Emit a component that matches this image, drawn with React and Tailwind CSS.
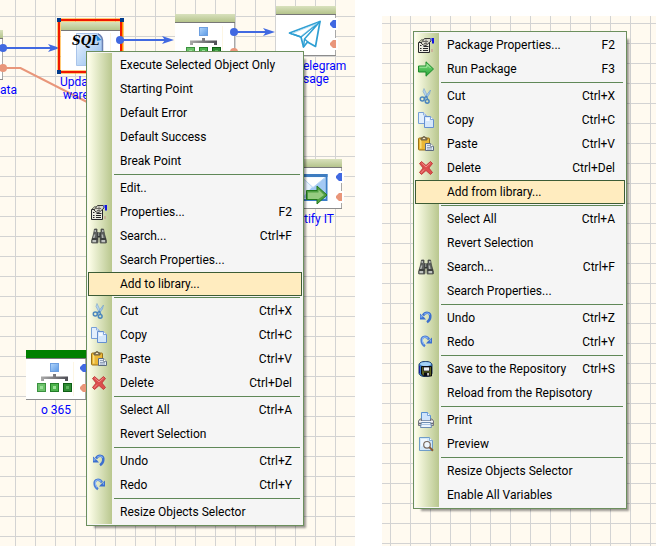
import React from "react";

const UI_FONT = "font-['Roboto','Open_Sans',sans-serif]";

/* ---------- menu icons (16 × 16) ---------- */

function Icon({ children }) {
  return (
    <svg viewBox="0 0 16 16" className="h-4 w-4" aria-hidden="true">
      {children}
    </svg>
  );
}

const PropertiesIcon = () => (
  <Icon>
    <path d="M0.5 5.5h11v10h-11z" fill="#ecebe2" stroke="#26262a" />
    <path d="M0.5 5.5 4 2.5l2 1.5" fill="none" stroke="#55554f" />
    <path d="M3 6 6.5 1.5h6L13 4l-5 4.5-3-.5z" fill="#d9d8cf" stroke="#3b3a38" />
    <path d="M5 4.5h5M6 6.5h3M8 2.5v5" stroke="#6d6b66" />
    <path d="M2 8.5h1.500M5.500 9.500h5M2 11.500h1.500M5 11.500h5M2 13.500h1.500M5 13.500h5" stroke="#26262a" />
    <path d="M12 1h2v3h-1z" fill="#6577d6" />
    <path d="M14 1h2v5.500h-2z" fill="#1414e0" />
    <path d="M13 12h2v3h-2z" fill="#cbb39a" />
  </Icon>
);

const SearchIcon = () => (
  <Icon>
    <path d="M3.500 1h2.500v2.500L7 5v8.500a1 1 0 0 1-1 1.500H1.500a1.200 1.200 0 0 1-1.200-1.400L2.500 6z" fill="#5d605e" stroke="#3a3c3b" strokeWidth=".7" />
    <path d="M12.500 1H10v2.500L9 5v8.500a1 1 0 0 0 1 1.500h4.500a1.200 1.200 0 0 0 1.200-1.400L13.500 6z" fill="#5d605e" stroke="#3a3c3b" strokeWidth=".7" />
    <path d="M6.500 4.500h3v5h-3z" fill="#333735" />
    <path d="M7.300 5h1v3h-1z" fill="#a9adaa" />
    <path d="M3.500 2h1.500v2H3.500zM11 2h1.500v2H11zM3 6.500h1.500L3.500 10H2zM10.500 6.500H12l.5 3.500H11z" fill="#b1b5b2" />
    <path d="M1 11h5.500M9.500 11H15" stroke="#202221" strokeWidth="1" />
    <path d="M1.500 12h3.500v2.200H1.500zM10.500 12h3.500v2.200h-3.500z" fill="#bfc3c0" />
  </Icon>
);

const CutIcon = () => (
  <Icon>
    <path d="M6 .5 5 3.500 8.500 10l1.300-1.300z" fill="#b5d4ef" stroke="#7ba6cc" strokeWidth=".6" />
    <path d="M12.500 2 11.500 6 7.500 11l-1-1.500z" fill="#a2c7ea" stroke="#6d9cc9" strokeWidth=".6" />
    <circle cx="4.300" cy="11" r="2" fill="none" stroke="#4b86bd" strokeWidth="1.500" />
    <circle cx="9.200" cy="13.300" r="1.900" fill="none" stroke="#4b86bd" strokeWidth="1.500" />
    <path d="m6 9.800 2.500-1.300 1.300 2.800" fill="none" stroke="#4b86bd" strokeWidth="1.300" />
  </Icon>
);

const CopyIcon = () => (
  <Icon>
    <path d="M.5.5h5l2.500 2.500v8.500H.5z" fill="#e3effc" stroke="#769fd8" />
    <path d="M5.500.5V3H8" fill="#fff" stroke="#769fd8" strokeWidth=".8" />
    <path d="M6.500 4.500h6l3 3v8h-9z" fill="#d5e7fb" stroke="#648fd0" />
    <path d="M12.500 4.500v3h3" fill="#fff" stroke="#648fd0" strokeWidth=".8" />
    <path d="M8 6h3.500v3H8z" fill="#f4f9ff" />
  </Icon>
);

const PasteIcon = () => (
  <Icon>
    <rect x=".5" y="2" width="11" height="12" rx="1" fill="#eab737" stroke="#9b7118" />
    <path d="M2 3.500h1.500v9H2z" fill="#f9dd7c" />
    <path d="M3 4V2h1.500a1.500 1.500 0 0 1 3 0H9v2z" fill="#9a8c6b" stroke="#5e5138" strokeWidth=".8" />
    <path d="M5 2h2v1H5z" fill="#f4e8bf" />
    <path d="M7.500 7.500h5l3 2.800v4.200h-8z" fill="#e2eaf5" stroke="#5c6b80" />
    <path d="M9 9.500h3M9 11.500h5M9 13h5" stroke="#8b9cb5" strokeWidth=".9" />
    <path d="M12.500 7.500v3h3" fill="#fff" stroke="#5c6b80" strokeWidth=".7" />
  </Icon>
);

const DeleteIcon = () => (
  <Icon>
    <path
      d="M3.500 1.500 8 5.500 12.500 1.500 14.500 3.500 10.900 8l3.600 4.500-2 2L8 10.500 3.500 14.500l-2-2L5.100 8 1.500 3.500z"
      fill="#dc4e4e"
      stroke="#c03434"
      strokeWidth=".9"
      strokeLinejoin="round"
    />
    <path d="m3.500 2.900 4.500 4 4.500-4M3 12.800l3-3.200" fill="none" stroke="#f08e88" strokeWidth="1" />
  </Icon>
);

const UndoIcon = () => (
  <Icon>
    <path d="M5 5.500C7.500 1.500 12.800 2 12.300 7c-.2 2.500-1.300 4-3.300 5.200" fill="none" stroke="#3c6fce" strokeWidth="2.500" />
    <path d="M6 4.300c2-2 5-1.800 5.600.7" fill="none" stroke="#86b1f3" strokeWidth="1.100" />
    <path d="M2 3.500v6h6L6 7.300z" fill="#3c6fce" />
    <path d="M2.500 4.500v3.500l2.500-1z" fill="#7daaf0" />
  </Icon>
);

const RedoIcon = () => (
  <Icon>
    <path d="M11 5.500C8.500 1.500 3.200 2 3.700 7c.2 2.500 1.300 4 3.300 5.200" fill="none" stroke="#4c7fd6" strokeWidth="2.500" />
    <path d="M10 4.300c-2-2-5-1.800-5.600.7-.3 2 .3 4 1.600 5.500" fill="none" stroke="#92baf5" strokeWidth="1.100" />
    <path d="M14 3.500v6H8L10 7.300z" fill="#3c6fce" />
    <path d="m13 5-1.500 2 1.500 1z" fill="#7daaf0" />
  </Icon>
);

const RunIcon = () => (
  <Icon>
    <defs>
      <linearGradient id="run-fill" x1="0" y1="0" x2="0" y2="1">
        <stop offset="0" stopColor="#8be386" />
        <stop offset="1" stopColor="#1fa032" />
      </linearGradient>
    </defs>
    <path d="M.5 5H8V.8L15.500 8 8 15.200V11H.5z" fill="url(#run-fill)" stroke="#1b8a2b" strokeLinejoin="round" />
    <path d="M1.500 6.200H9V3.500l3.500 3.500" fill="none" stroke="#b3efad" strokeWidth=".8" />
  </Icon>
);

const SaveIcon = () => (
  <Icon>
    <path d="M1 4C1 1.500 4 .5 7.500.5S14 1.500 14 4v8c0 2.500-3 3.500-6.500 3.500S1 14.500 1 12z" fill="#3c7fc8" stroke="#173a6d" />
    <ellipse cx="7.500" cy="3" rx="5.500" ry="2" fill="#a5d2f6" />
    <path d="M3.500 5.500h10v9.500h-8l-2-2z" fill="#5d6420" stroke="#0a0a12" />
    <path d="M5.500 6h6v4h-6z" fill="#eef1f4" stroke="#0a0a12" strokeWidth=".7" />
    <path d="M6 11.500h5.500V15H6z" fill="#0a0a12" />
    <path d="M9.300 12h1.500v2.500H9.300z" fill="#f4f4f4" />
    <path d="M1.500 5v7" stroke="#1621a1" />
  </Icon>
);

const PrintIcon = () => (
  <Icon>
    <path d="M3.500.5h6l3 3V9h-9z" fill="#cfe4fb" stroke="#5990d0" />
    <path d="M9.500.5v3h3" fill="#fff" stroke="#5990d0" strokeWidth=".8" />
    <path d="M2 7h1.500v2h9V7H14l1.500 2v4.500H.5V9z" fill="#c5c7ce" stroke="#74757e" />
    <path d="M1 9.500h14" stroke="#f5f6f9" />
    <path d="M1 11.500h2M13 11.500h2" stroke="#686a73" />
    <path d="M3.500 10.500h9l1 5h-11z" fill="#edf5fe" stroke="#6d8db3" />
    <path d="M4 12.500h8" stroke="#a9c4e2" />
  </Icon>
);

const PreviewIcon = () => (
  <Icon>
    <path d="M1.500 1.500h10l3 3v10h-13z" fill="#d3e8fa" stroke="#6f9dc9" />
    <path d="M11.500 1.500v3h3" fill="#fff" stroke="#6f9dc9" strokeWidth=".8" />
    <path d="M3 3h6v3L3 11z" fill="#f0f8ff" />
    <circle cx="9" cy="8.800" r="3.300" fill="#eef6fc" stroke="#77695f" strokeWidth="1.200" />
    <path d="m11.500 11.300 3.500 3.500" stroke="#8b5a34" strokeWidth="2" />
  </Icon>
);

/* ---------- context menus ---------- */

const objectMenu = [
  [
    { label: "Execute Selected Object Only" },
    { label: "Starting Point" },
    { label: "Default Error" },
    { label: "Default Success" },
    { label: "Break Point" },
  ],
  [
    { label: "Edit.." },
    { label: "Properties...", keys: "F2", icon: PropertiesIcon },
    { label: "Search...", keys: "Ctrl+F", icon: SearchIcon },
    { label: "Search Properties..." },
    { label: "Add to library...", active: true },
  ],
  [
    { label: "Cut", keys: "Ctrl+X", icon: CutIcon },
    { label: "Copy", keys: "Ctrl+C", icon: CopyIcon },
    { label: "Paste", keys: "Ctrl+V", icon: PasteIcon },
    { label: "Delete", keys: "Ctrl+Del", icon: DeleteIcon },
  ],
  [{ label: "Select All", keys: "Ctrl+A" }, { label: "Revert Selection" }],
  [
    { label: "Undo", keys: "Ctrl+Z", icon: UndoIcon },
    { label: "Redo", keys: "Ctrl+Y", icon: RedoIcon },
  ],
  [{ label: "Resize Objects Selector" }],
];

const packageMenu = [
  [
    { label: "Package Properties...", keys: "F2", icon: PropertiesIcon },
    { label: "Run Package", keys: "F3", icon: RunIcon },
  ],
  [
    { label: "Cut", keys: "Ctrl+X", icon: CutIcon },
    { label: "Copy", keys: "Ctrl+C", icon: CopyIcon },
    { label: "Paste", keys: "Ctrl+V", icon: PasteIcon },
    { label: "Delete", keys: "Ctrl+Del", icon: DeleteIcon },
    { label: "Add from library...", active: true },
  ],
  [
    { label: "Select All", keys: "Ctrl+A" },
    { label: "Revert Selection" },
    { label: "Search...", keys: "Ctrl+F", icon: SearchIcon },
    { label: "Search Properties..." },
  ],
  [
    { label: "Undo", keys: "Ctrl+Z", icon: UndoIcon },
    { label: "Redo", keys: "Ctrl+Y", icon: RedoIcon },
  ],
  [
    { label: "Save to the Repository", keys: "Ctrl+S", icon: SaveIcon },
    { label: "Reload from the Repisotory" },
  ],
  [
    { label: "Print", icon: PrintIcon },
    { label: "Preview", icon: PreviewIcon },
  ],
  [{ label: "Resize Objects Selector" }, { label: "Enable All Variables" }],
];

function MenuItem({ label, keys, icon: Glyph, active }) {
  return (
    <button
      type="button"
      role="menuitem"
      className={
        "flex h-6 w-full items-center border pr-[9px] text-left " +
        (active ? "border-[#3d5c35] bg-[#ffecbf]" : "border-transparent")
      }
    >
      <span className="flex w-[31px] shrink-0 pl-[2px]">{Glyph && <Glyph />}</span>
      <span className="flex-1 whitespace-nowrap">{label}</span>
      {keys && <span className="whitespace-nowrap">{keys}</span>}
    </button>
  );
}

function ContextMenu({ groups, label, className }) {
  return (
    <div
      role="menu"
      aria-label={label}
      className={
        "absolute border border-[#6c8f5d] bg-[#f5f5f5] p-px text-[12px] leading-4 text-black shadow-[5px_5px_2px_-3px_rgba(0,0,0,0.4)] " +
        className
      }
    >
      <div className="bg-[linear-gradient(to_right,#ffffeb,#dbe3bd_12px,#b9c78e_24px,transparent_24px)]">
        {groups.map((items, i) => (
          <React.Fragment key={i}>
            {i > 0 && (
              <div role="separator" className="py-px pl-[26px] pr-[2px]">
                <div className="h-px bg-[#5f8857]" />
              </div>
            )}
            {items.map((item) => (
              <MenuItem key={item.label} {...item} />
            ))}
          </React.Fragment>
        ))}
      </div>
    </div>
  );
}

/* ---------- diagram ---------- */

function Node({ className, head, children }) {
  return (
    <div className={"absolute flex h-[50px] w-[60px] flex-col border-b border-[#8c8c8c] bg-white " + className}>
      <div
        className={
          "h-[9px] border-b border-[#777777] " +
          (head === "green" ? "bg-[#008000]" : "bg-linear-to-b from-[#d9e1bd] to-[#b5c48c]")
        }
      />
      <div className="flex-1 border-r border-r-[#a8a8a8]">{children}</div>
    </div>
  );
}

function TreeIcon() {
  return (
    <svg viewBox="0 0 48 40" className="h-10 w-12" aria-hidden="true">
      <defs>
        <linearGradient id="tree-top" x1="0" y1="0" x2="1" y2="1">
          <stop offset="0" stopColor="#b2d5fa" />
          <stop offset="1" stopColor="#5b9ae6" />
        </linearGradient>
        <linearGradient id="tree-bar" x1="0" y1="0" x2="1" y2="0">
          <stop offset="0" stopColor="#aaaaaa" />
          <stop offset="1" stopColor="#4d4d55" />
        </linearGradient>
      </defs>
      <rect x="24.500" y="4.500" width="8" height="8" fill="url(#tree-top)" stroke="#6d9fe0" />
      <path d="M27 15h3v2.500h12V22h-3v-2H18v2h-3v-4.500h12z" fill="url(#tree-bar)" />
      <rect x="11.500" y="24.500" width="8" height="8" fill="#6cc26a" stroke="#3b9140" />
      <rect x="24.500" y="24.500" width="8" height="8" fill="#4cb24c" stroke="#237d28" />
      <rect x="37.500" y="24.500" width="8" height="8" fill="#2f8b34" stroke="#0e5e14" />
      <path d="M14 27h3v3h-3zM27 27h3v3h-3z" fill="#9be098" />
      <path d="M40 27h3v3h-3z" fill="#5cb45d" />
      <path d="M47.500 3v34" stroke="#fdf6e4" />
    </svg>
  );
}

function TelegramIcon() {
  return (
    <svg viewBox="0 0 36 32" className="ml-3 mt-1 h-8 w-9" aria-hidden="true">
      <path
        d="M1.500 14 32 2.500 27.500 27.500 19.500 23l-4 5-2.500-10z"
        fill="#fff"
        stroke="#2f9fd3"
        strokeWidth="1.700"
        strokeLinejoin="round"
      />
      <path d="M1.500 14 13 18 32 2.500 16.500 20l-1 8M16.500 20l4 3.500" fill="none" stroke="#2f9fd3" strokeWidth="1.500" strokeLinejoin="round" />
      <path d="M4 14.500 29 4.500M13 17 29.500 4" fill="none" stroke="#9ad3ee" strokeWidth=".7" />
    </svg>
  );
}

function SqlIcon() {
  return (
    <svg viewBox="0 0 50 40" className="h-10 w-[50px]" aria-hidden="true">
      <defs>
        <linearGradient id="sql-page" x1="0" y1="0" x2="1" y2="1">
          <stop offset="0" stopColor="#f2f8ff" />
          <stop offset="1" stopColor="#8bb9ee" />
        </linearGradient>
      </defs>
      <path d="M15.500 2.500H36q5 1 5 8v24H15.500z" fill="url(#sql-page)" stroke="#a9c4ea" />
      <path d="M37 3q5 2 4.500 9v22" fill="none" stroke="#6b82b4" strokeWidth="1.500" />
      <path d="M35 3.500 40.500 9 36 10z" fill="#1f86d8" />
      <text
        x="11"
        y="14"
        fontSize="12"
        fontWeight="bold"
        fontStyle="italic"
        fill="#000"
        className="font-['DejaVu_Serif',serif]"
      >
        SQL
      </text>
      <path d="M49.500 2v34" stroke="#fdf6e4" />
    </svg>
  );
}

function MailIcon() {
  return (
    <svg viewBox="0 0 40 38" className="ml-2 h-[38px] w-10" aria-hidden="true">
      <rect x="10.500" y="7" width="26" height="25" fill="#e7f3ff" stroke="#3a7ec8" strokeWidth="2" />
      <path d="M10 7.500h27.500" stroke="#3e7cc0" strokeWidth="3" />
      <path d="m12 30 12-13 11-7v21z" fill="#a3c9f4" />
      <path d="m12 9.500 11 10 12-10" fill="#fff" stroke="#b8d5f3" />
      <path d="M16.500 22.500H27V18l10 9-10 9v-4.500H16.500z" fill="#51a043" stroke="#237a1c" />
      <path d="M18 24.500h10.500v-3l5.500 5.500-5.500 4H18z" fill="#96cb80" />
    </svg>
  );
}

function Label({ className, children }) {
  return (
    <span className={"absolute whitespace-pre text-[12px] leading-[13px] text-[#0000ff] " + className}>
      {children}
    </span>
  );
}

function Diagram() {
  return (
    <>
      <Node className="-left-[57px] top-[30px]" />
      <Node className="left-[61px] top-[22px]">
        <SqlIcon />
      </Node>
      <Node className="left-[175px] top-[14px]">
        <TreeIcon />
      </Node>
      <Node className="left-[276px] top-[6px]">
        <TelegramIcon />
      </Node>
      <Node className="left-[282px] top-[159px]">
        <MailIcon />
      </Node>
      <Node className="left-[26px] top-[350px]" head="green">
        <TreeIcon />
      </Node>

      <svg viewBox="0 0 355 546" className="absolute left-0 top-0 h-[546px] w-[355px]" aria-hidden="true">
        <path d="M336 18v12M336 38v12M342 171v12M342 191v12" stroke="#fff" strokeWidth="4" />
        <path d="M0 68h20.500L87 102" fill="none" stroke="#e9967a" strokeWidth="2" />
        <g stroke="#4169e1" strokeWidth="2">
          <path d="M3 48h48M120 40h46M234 32h33" />
        </g>
        <g fill="#4169e1">
          <path d="m60 48-12-4 3 4-3 4zM174 40l-12-4 3 4-3 4zM275 32l-12-4 3 4-3 4z" />
          <circle cx="3" cy="48" r="4" />
          <circle cx="234" cy="32" r="4" />
          <path d="M336 20h-3l-3 3v2l3 3h3zM342 173h-3l-3 3v2l3 3h3zM86 364h-3l-3 3v2l3 3h3z" />
        </g>
        <g fill="#e9967a">
          <circle cx="3" cy="68" r="4" />
          <circle cx="234" cy="52" r="4" />
          <path d="M336 40h-3l-3 3v2l3 3h3zM342 193h-3l-3 3v2l3 3h3zM86 384h-3l-3 3v2l3 3h3z" />
        </g>
        <rect x="59" y="20" width="63" height="52" fill="none" stroke="#ff9a00" strokeWidth="3" />
        <rect x="59" y="20" width="62" height="52" fill="none" stroke="#f01800" strokeWidth="2" />
        <circle cx="120" cy="40" r="4" fill="#4169e1" />
        <path d="M57 18h4v4h-4zM120 18h4v4h-4zM57 70h4v4h-4z" fill="#003a8c" />
      </svg>

      <Label className="left-0 top-[84px]">ata</Label>
      <Label className="left-[60px] top-[76px]">{"Upda\n ware"}</Label>
      <Label className="left-[303px] top-[60px]">{"elegram\nsage"}</Label>
      <Label className="left-[304px] top-[213px]">tify IT</Label>
      <Label className="left-[41px] top-[404px]">o 365</Label>
    </>
  );
}

const GRID =
  "relative overflow-hidden bg-[#fffaf0] bg-[linear-gradient(to_right,#d3d3d3_1px,transparent_1px),linear-gradient(to_bottom,#d3d3d3_1px,transparent_1px)] bg-[size:20px_20px] ";

export default function App() {
  return (
    <main className={"grid min-h-screen grid-cols-[355fr_274fr] gap-x-[27px] bg-white " + UI_FONT}>
      <section aria-label="Object menu" className={GRID + "min-h-[546px] bg-position-[15px_16px]"}>
        <Diagram />
        <ContextMenu label="Object" groups={objectMenu} className="left-[86px] top-[51px] w-[218px]" />
      </section>
      <section aria-label="Package menu" className={GRID + "mt-4 bg-position-[8px_7px]"}>
        <ContextMenu label="Package" groups={packageMenu} className="left-[31px] top-[15px] w-[214px]" />
      </section>
    </main>
  );
}
